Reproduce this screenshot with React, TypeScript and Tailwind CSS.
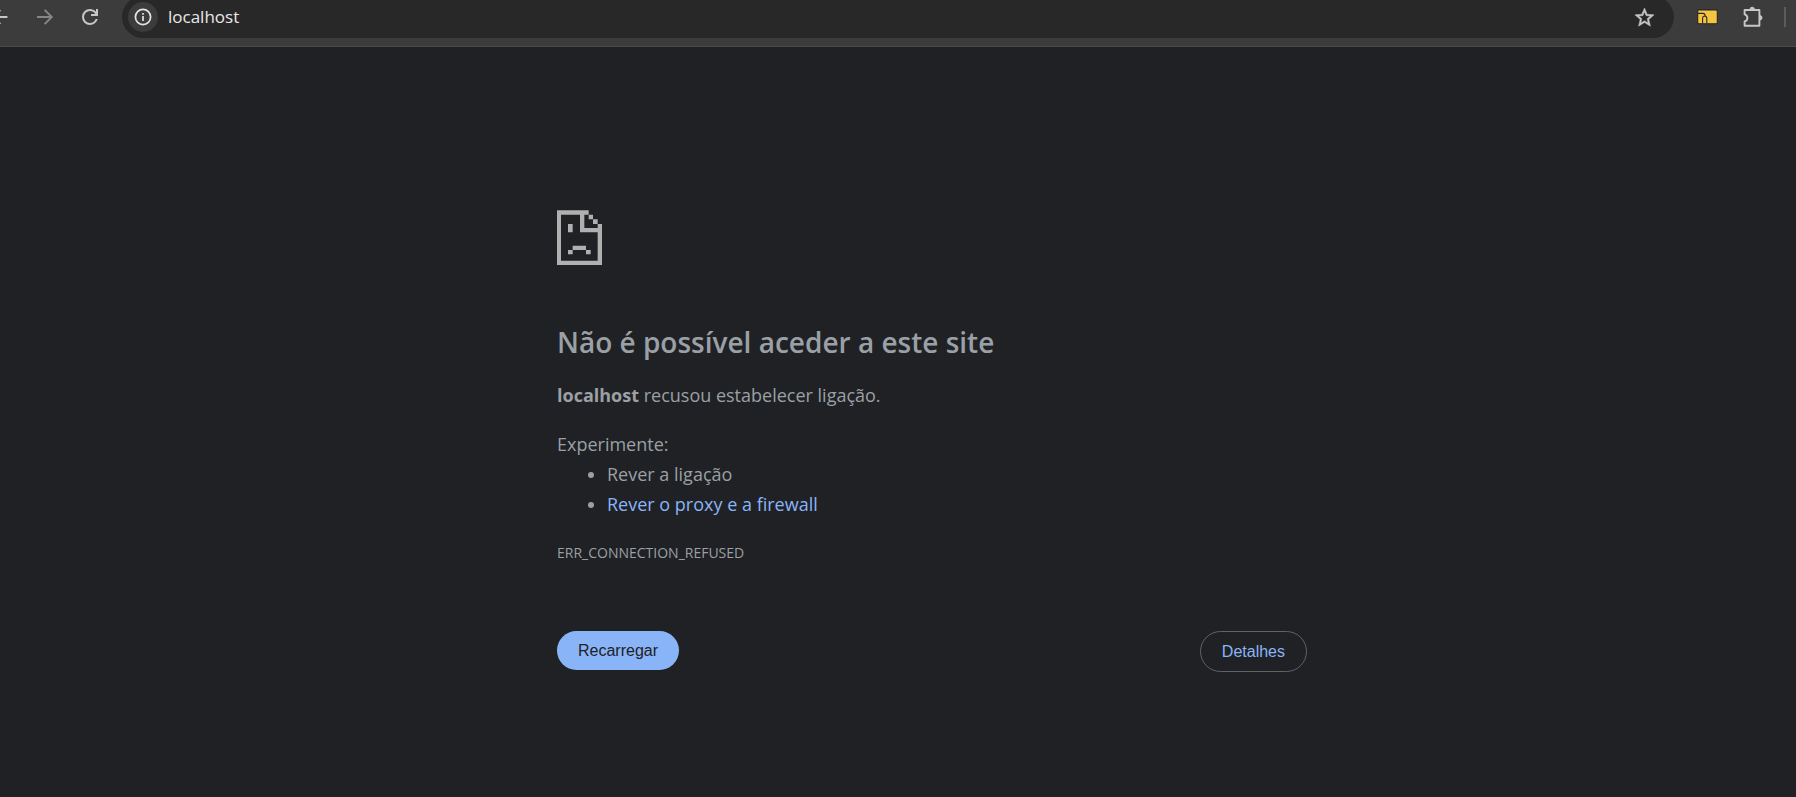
function BackIcon() {
  return (
    <svg viewBox="0 0 24 24" className="size-6" fill="currentColor" aria-hidden="true">
      <path d="M7.8 13l5.2 5.3L11.7 19.6 4.1 12l7.6-7.6L13 5.7 7.8 11H19.4v2z" />
    </svg>
  );
}

function ForwardIcon() {
  return (
    <svg viewBox="0 0 24 24" className="size-6" fill="none" stroke="currentColor" strokeWidth="1.9" aria-hidden="true">
      <path d="M4 12h14.6M11.6 4.8l7.2 7.2-7.2 7.2" />
    </svg>
  );
}

function ReloadIcon() {
  return (
    <svg viewBox="0 0 24 24" className="size-6" fill="currentColor" aria-hidden="true">
      <path d="M12 20q-3.35 0-5.675-2.325T4 12t2.325-5.675T12 4q1.725 0 3.3.713T18 6.75V4h2v7h-7V9h4.2q-.8-1.4-2.187-2.2T12 6Q9.5 6 7.75 7.75T6 12t1.75 4.25T12 18q1.925 0 3.475-1.1T17.65 14h2.1q-.7 2.65-2.85 4.325T12 20" />
    </svg>
  );
}

function InfoIcon() {
  return (
    <svg viewBox="0 0 18 18" className="size-[18px]" fill="none" stroke="currentColor" strokeWidth="1.7" aria-hidden="true">
      <circle cx="9" cy="9" r="7.6" />
      <path d="M9 8v5M9 5v1.8" />
    </svg>
  );
}

function StarIcon() {
  return (
    <svg viewBox="0 0 24 24" className="size-[23px]" fill="currentColor" stroke="currentColor" strokeWidth="0.5" aria-hidden="true">
      <path d="M22 9.24l-7.19-.62L12 2 9.19 8.63 2 9.24l5.46 4.73L5.82 21 12 17.27 18.18 21l-1.63-7.03L22 9.24zM12 15.4l-3.76 2.27 1-4.28-3.32-2.88 4.38-.38L12 6.1l1.71 4.04 4.38.38-3.32 2.88 1 4.28L12 15.4z" />
    </svg>
  );
}

function ExtensionIcon() {
  return (
    <svg viewBox="0 0 21 16" className="h-4 w-[21px]" fill="none" stroke="#25262a" strokeWidth="1.1" aria-hidden="true">
      <rect x="0.7" y="0.9" width="19.6" height="13.8" rx="1.2" fill="#f5c542" />
      <path d="M1 4.4h5q2 0 2.2 2.2M5.6 14.5V9.2q0-2 2-2.2 2.2.2 2.2 2.2v5.3" />
    </svg>
  );
}

function PuzzleIcon() {
  return (
    <svg viewBox="0 0 22 22" className="size-[22px]" aria-hidden="true">
      <path
        d="M3.2 4h14.2v15.8H2.6v-4.4a3.6 3.6 0 0 0 0-7V4z"
        fill="none"
        stroke="currentColor"
        strokeWidth="1.9"
        strokeLinejoin="round"
      />
      <path d="M8 3.4a2.2 2.2 0 0 1 4.4 0zM17.8 9.6a2.2 2.2 0 0 1 0 4.4z" fill="currentColor" stroke="currentColor" />
    </svg>
  );
}

function SadPageIcon() {
  return (
    <svg viewBox="0 0 135 165" className="h-[55px] w-[45px]" fill="#b0b0b0" aria-hidden="true">
      <path d="M0 1h95v13H0zM0 1h12v164H0zM0 152h135v13H0zM122 42h13v123h-13zM69 14h13v53H69zM69 54h66v13H69zM95 14h13v14H95zM108 28h14v14h-14zM33 42h14v25H33zM47 107h40v13H47zM33 120h14v13H33zM87 120h14v13H87z" />
    </svg>
  );
}

function Toolbar() {
  return (
    <header className="flex h-[47px] overflow-hidden border-b border-[#4a4a4a] bg-[#3c3c3c] text-[#c7c7c7]">
      <nav className="-ml-3 flex h-[34px] items-center gap-[21px]" aria-label="Navegação">
        <button type="button" aria-label="Retroceder"><BackIcon /></button>
        <button type="button" aria-label="Avançar" className="text-[#868686]"><ForwardIcon /></button>
        <button type="button" aria-label="Recarregar página"><ReloadIcon /></button>
      </nav>
      <div className="-mt-1 ml-5 flex h-[42px] min-w-0 flex-1 items-center rounded-full bg-[#282828] pr-[18px] pl-1.5">
        <button
          type="button"
          aria-label="Ver informações do site"
          className="flex size-[30px] shrink-0 items-center justify-center rounded-full bg-[#3c3c3c] text-[#e3e3e3]"
        >
          <InfoIcon />
        </button>
        <input
          type="text"
          aria-label="Endereço"
          defaultValue="localhost"
          className="ml-2.5 min-w-0 flex-1 bg-transparent text-[17px] text-[#e8e8e8] outline-none"
        />
        <button type="button" aria-label="Adicionar aos marcadores"><StarIcon /></button>
      </div>
      <div className="ml-[23px] flex h-[34px] items-center pr-2.5">
        <button type="button" aria-label="Extensão"><ExtensionIcon /></button>
        <button type="button" aria-label="Extensões" className="ml-6"><PuzzleIcon /></button>
        <span className="ml-5 h-5 w-0.5 bg-[#5c5c5c]" />
      </div>
    </header>
  );
}

export default function App() {
  return (
    <div className="flex min-h-screen flex-col bg-[#202124] font-['Open_Sans','Noto_Sans',sans-serif]">
      <Toolbar />
      <main className="flex flex-1 justify-center pt-[163px] pl-[68px] text-[18px] leading-[30px] text-[#9aa0a6]">
        <div className="w-full max-w-[750px]">
          <SadPageIcon />
          <h1 className="mt-[57px] text-[28px] leading-10 font-semibold">Não é possível aceder a este site</h1>
          <p className="mt-[18px]">
            <strong className="font-bold">localhost</strong> recusou estabelecer ligação.
          </p>
          <div className="mt-[19px]">
            <p>Experimente:</p>
            <ul className="list-disc pl-[50px]">
              <li>Rever a ligação</li>
              <li><a href="#proxy" className="text-[#8ab4f8]">Rever o proxy e a firewall</a></li>
            </ul>
          </div>
          <p className="mt-5 text-[14px] leading-7">ERR_CONNECTION_REFUSED</p>
          <div className="mt-16 flex items-start justify-between font-['Liberation_Sans',Arial,sans-serif] text-[16px] leading-[19px]">
            <button type="button" className="rounded-full bg-[#8ab4f8] px-[21px] py-2.5 text-[#202124]">Recarregar</button>
            <button type="button" className="rounded-full border border-[#5f6368] px-[21px] py-2.5 text-[#8ab4f8]">Detalhes</button>
          </div>
        </div>
      </main>
    </div>
  );
}
